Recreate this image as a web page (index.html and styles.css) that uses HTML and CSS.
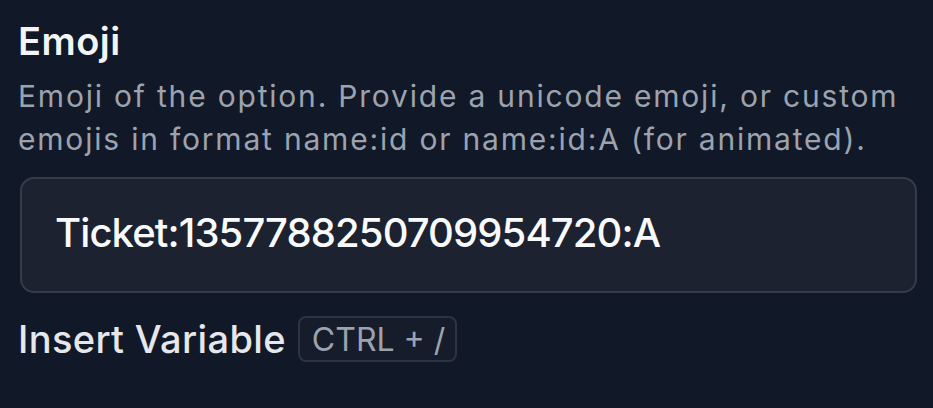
FILE: index.html
```html
<!DOCTYPE html>
<html lang="en">
<head>
<meta charset="utf-8">
<title>Emoji</title>
<link rel="stylesheet" href="styles.css">
</head>
<body>
<div class="field">
  <div class="label">Emoji</div>
  <div class="desc">Emoji of the option. Provide a unicode emoji, or custom emojis in format name:id or name:id:A (for animated).</div>
  <div class="input">Ticket:1357788250709954720:A</div>
  <div class="insert">
    <span class="insert-label">Insert Variable</span>
    <span class="kbd">CTRL + /</span>
  </div>
</div>
</body>
</html>
```
FILE: styles.css
```css
html, body {
  margin: 0;
  background: #111827;
}
body {
  font-family: Inter, "Noto Sans", sans-serif;
  padding: 19px 16px 0 18px;
}
.field {
  display: flex;
  flex-direction: column;
}
.label {
  font-size: 38px;
  line-height: 44px;
  font-weight: 600;
  letter-spacing: 0.5px;
  color: #f3f4f6;
}
.desc {
  margin-top: 12px;
  font-size: 30px;
  line-height: 43px;
  letter-spacing: 1.8px;
  color: #9ca3af;
}
.input {
  margin: 16px 0 0 2px;
  height: 116px;
  box-sizing: border-box;
  border: 2px solid #353b49;
  border-radius: 14px;
  background: #1d2230;
  color: #f9fafb;
  font-size: 40px;
  font-weight: 500;
  letter-spacing: -0.9px;
  display: flex;
  align-items: center;
  padding: 0 0 5px 33px;
}
.insert {
  margin-top: 23px;
  display: flex;
  align-items: center;
  gap: 12px;
}
.insert-label {
  font-size: 38px;
  font-weight: 500;
  letter-spacing: 0.35px;
  color: #e5e7eb;
}
.kbd {
  border: 2px solid #2c3341;
  background: #161c29;
  border-radius: 8px;
  padding: 2px 10px 0 12px;
  font-size: 32px;
  line-height: 40px;
  color: #9ca3af;
}
```
